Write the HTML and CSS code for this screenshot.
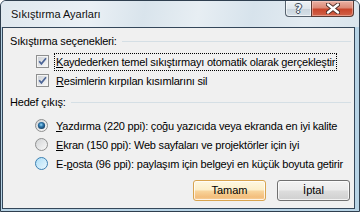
FILE: index.html
```html
<!DOCTYPE html>
<html lang="tr">
<head>
<meta charset="utf-8">
<title>Sıkıştırma Ayarları</title>
<link rel="stylesheet" href="styles.css">
</head>
<body>
<div class="window">
  <div class="titlebar">
    <span class="title">Sıkıştırma Ayarları</span>
    <div class="cbtns">
      <div class="cbtn help"><span class="qmark">?</span></div>
      <div class="cbtn close">
        <svg width="14" height="11" viewBox="0 0 14 11">
          <path d="M2 1.5 L12 9.5 M12 1.5 L2 9.5" stroke="#4a2a24" stroke-width="4.2" stroke-linecap="round" fill="none"/>
          <path d="M2 1.5 L12 9.5 M12 1.5 L2 9.5" stroke="#ffffff" stroke-width="2.4" stroke-linecap="round" fill="none"/>
        </svg>
      </div>
    </div>
  </div>
  <div class="client">
    <div class="group-head"><span>Sıkıştırma seçenekleri:</span><div class="rule"></div></div>
    <div class="opts checks">
      <div class="row">
        <svg class="box" width="13" height="13" viewBox="0 0 13 13">
          <defs><linearGradient id="cb" x1="0" y1="0" x2="1" y2="1"><stop offset="0" stop-color="#cdd1d6"/><stop offset="1" stop-color="#f7f7f7"/></linearGradient></defs>
          <rect x="0.5" y="0.5" width="12" height="12" fill="#f4f4f4" stroke="#8e8f8f"/>
          <rect x="2" y="2" width="9" height="9" fill="url(#cb)"/>
          <path d="M3.2 6.2 L5.4 8.8 L10 3.2" stroke="#4c6597" stroke-width="1.7" fill="none"/>
        </svg>
        <span class="lbl focus"><u>K</u>aydederken temel sıkıştırmayı otomatik olarak gerçekleştir</span>
      </div>
      <div class="row">
        <svg class="box" width="13" height="13" viewBox="0 0 13 13">
          <rect x="0.5" y="0.5" width="12" height="12" fill="#f4f4f4" stroke="#8e8f8f"/>
          <rect x="2" y="2" width="9" height="9" fill="url(#cb)"/>
          <path d="M3.2 6.2 L5.4 8.8 L10 3.2" stroke="#4c6597" stroke-width="1.7" fill="none"/>
        </svg>
        <span class="lbl"><u>R</u>esimlerin kırpılan kısımlarını sil</span>
      </div>
    </div>
    <div class="group-head second"><span>Hedef çıkış:</span><div class="rule"></div></div>
    <div class="opts radios">
      <div class="row">
        <svg class="radio" width="13" height="13" viewBox="0 0 13 13">
          <defs>
            <radialGradient id="rdot" cx="45%" cy="40%" r="60%"><stop offset="0" stop-color="#9adcfa"/><stop offset="0.45" stop-color="#2f78ad"/><stop offset="1" stop-color="#173f63"/></radialGradient>
            <linearGradient id="rg" x1="0" y1="0" x2="1" y2="1"><stop offset="0" stop-color="#cfd1d3"/><stop offset="1" stop-color="#fbfbfb"/></linearGradient>
            <linearGradient id="rh" x1="0" y1="0" x2="1" y2="1"><stop offset="0" stop-color="#a9dcf6"/><stop offset="1" stop-color="#eef8fe"/></linearGradient>
          </defs>
          <circle cx="6.5" cy="6.5" r="6" fill="url(#rg)" stroke="#8e8f8f"/>
          <circle cx="6.5" cy="6.5" r="3.6" fill="url(#rdot)"/>
        </svg>
        <span class="lbl"><u>Y</u>azdırma (220 ppi): çoğu yazıcıda veya ekranda en iyi kalite</span>
      </div>
      <div class="row">
        <svg class="radio" width="13" height="13" viewBox="0 0 13 13">
          <circle cx="6.5" cy="6.5" r="6" fill="url(#rg)" stroke="#8e8f8f"/>
        </svg>
        <span class="lbl"><u>E</u>kran (150 ppi): Web sayfaları ve projektörler için iyi</span>
      </div>
      <div class="row">
        <svg class="radio" width="13" height="13" viewBox="0 0 13 13">
          <circle cx="6.5" cy="6.5" r="6" fill="url(#rh)" stroke="#3c7fb1"/>
        </svg>
        <span class="lbl">E-<u>p</u>osta (96 ppi): paylaşım için belgeyi en küçük boyuta getirir</span>
      </div>
    </div>
    <div class="buttons">
      <div class="btn default">Tamam</div>
      <div class="btn"><u>İ</u>ptal</div>
    </div>
  </div>
</div>
</body>
</html>
```
FILE: styles.css
```css
html, body {
  margin: 0;
  padding: 0;
  background: #ffffff;
}

.window {
  width: 360px;
  height: 212px;
  box-sizing: border-box;
  border: 1px solid #2f3f4f;
  border-radius: 6px 6px 0 0;
  background: #b7d3e5;
  display: flex;
  flex-direction: column;
  overflow: hidden;
  font-family: "Liberation Sans", Arial, sans-serif;
  font-size: 11px;
  color: #000;
}

.titlebar {
  height: 26px;
  flex: none;
  display: flex;
  align-items: flex-start;
  background: linear-gradient(100deg, #dfe8ef 0%, #eaf0f5 25%, #d9e4ec 40%, #e7eef3 55%, #d7e3ec 70%, #e3ebf1 85%, #dae5ed 100%);
}

.title {
  margin-top: 6px;
  padding-left: 10px;
  line-height: 15px;
  color: #101010;
  text-shadow: 0 0 6px rgba(255, 255, 255, 0.9);
}

.cbtns {
  margin-left: auto;
  margin-right: 5px;
  display: flex;
}

.cbtn {
  height: 16px;
  box-sizing: border-box;
  display: flex;
  align-items: center;
  justify-content: center;
  border: 1px solid #56626e;
  border-top: none;
}

.help {
  width: 26px;
  border-right: none;
  border-radius: 0 0 0 4px;
  background: linear-gradient(#eef2f5 0%, #dfe6ec 50%, #c9d4dd 51%, #d6e0e8 100%);
  box-shadow: inset 0 0 0 1px rgba(255, 255, 255, 0.6);
}

.qmark {
  font-family: "DejaVu Sans", sans-serif;
  font-weight: bold;
  font-size: 12px;
  line-height: 12px;
  color: #f4f6f8;
  text-shadow: 1px 0 0 #3d4b58, -1px 0 0 #3d4b58, 0 1px 0 #3d4b58, 0 -1px 0 #3d4b58;
}

.close {
  width: 43px;
  border-color: #5b3a33;
  border-radius: 0 0 4px 0;
  background: linear-gradient(#eab1a4 0%, #dc8a77 45%, #c9452b 55%, #d0634a 100%);
  box-shadow: inset 0 0 0 1px rgba(255, 220, 210, 0.45);
}

.client {
  flex: 1;
  margin: 0 4px 2px 1px;
  border: 1px solid #34475a;
  background: #f0f0f0;
  padding: 6px 3px 0 7px;
  display: flex;
  flex-direction: column;
  letter-spacing: -0.2px;
}

.group-head {
  display: flex;
  align-items: center;
  gap: 5px;
  line-height: 15px;
  height: 15px;
}

.group-head.second {
  margin-top: 5px;
}

.rule {
  flex: 1;
  height: 1px;
  background: #d5dfe5;
}

.opts {
  display: flex;
  flex-direction: column;
}

.checks {
  margin-top: 3px;
  padding-left: 26px;
}

.radios {
  margin-top: 6px;
  padding-left: 25px;
}

.row {
  height: 19px;
  display: flex;
  align-items: center;
}

.box {
  flex: none;
  margin-right: 5px;
}

.radio {
  flex: none;
  margin-right: 6px;
}

.lbl {
  border: 1px dotted transparent;
  padding: 0 1px;
  line-height: 16px;
  white-space: nowrap;
}

.lbl.focus {
  border-color: #000;
}

u {
  text-underline-offset: 1px;
}

.buttons {
  margin-top: 7px;
  margin-right: 1px;
  display: flex;
  justify-content: flex-end;
  gap: 11px;
}

.btn {
  width: 73px;
  height: 21px;
  box-sizing: border-box;
  border: 1px solid #707070;
  border-radius: 3px;
  background: linear-gradient(#f3f3f3 0%, #ebebeb 48%, #dddddd 52%, #cfcfcf 100%);
  box-shadow: inset 0 0 0 1px rgba(255, 255, 255, 0.75);
  display: flex;
  align-items: center;
  justify-content: center;
  line-height: 15px;
  letter-spacing: 0;
}

.btn u {
  text-decoration: none;
}

.btn.default {
  border-color: #d8a44f;
  background: linear-gradient(#fef8e2 0%, #fcefcb 45%, #f8d39a 55%, #f3be7c 85%, #f8d2a0 100%);
}
```
